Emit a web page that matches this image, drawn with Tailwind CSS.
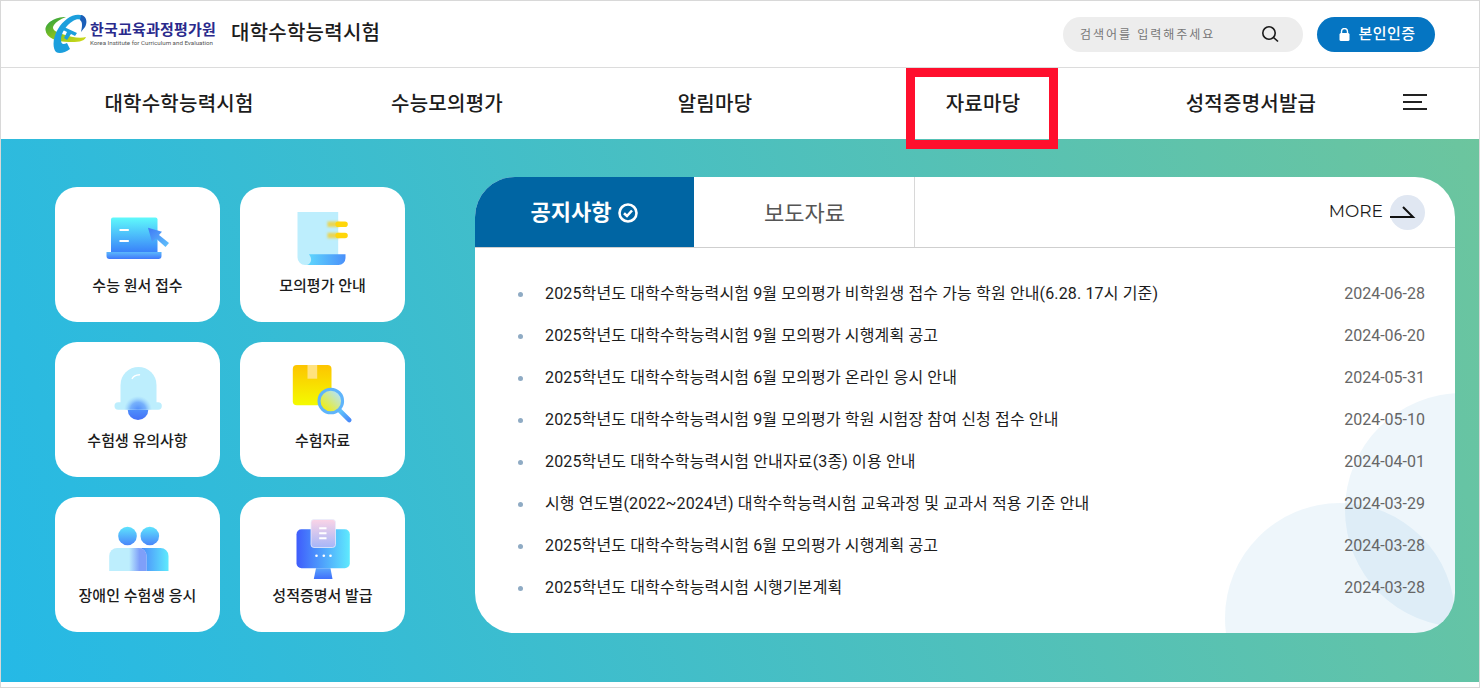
<!DOCTYPE html>
<html lang="ko">
<head>
    <meta charset="UTF-8">
    <title>대학수학능력시험</title>
    <script src="https://cdn.jsdelivr.net/npm/@tailwindcss/browser@4"></script>
</head>
<body class="bg-white font-['Roboto','Noto_Sans_CJK_KR',sans-serif] text-[#1c1c1c]">
<div class="relative h-[688px] w-[1480px] overflow-hidden border-x border-t border-[#d8d8d8]">

    <!-- top bar -->
    <header class="flex h-[67px] items-center justify-between border-b border-[#dcdcdc] pl-[44px] pr-[44px]">
        <div class="flex items-center">
            <svg class="h-[40px] w-[42px]" viewBox="0 0 42 40">
                <defs>
                    <linearGradient id="lg1" x1="0" y1="0" x2="1" y2="1"><stop offset="0" stop-color="#1f9e45"/><stop offset="0.500" stop-color="#8cc21e"/><stop offset="1" stop-color="#d6dc1a"/></linearGradient>
                </defs>
                <path d="M21 3C10 3 0 9 0.500 16C1 24 12 28 24 28C32 28 39 28 41 23C35 25 26 23 17 20C10 18 6 15 9 11C11 8 15 5 21 3Z" fill="url(#lg1)"/>
                <path d="M38 2C30 -2 19 5 13 15C8 23 7 33 11 38C14 40 20 39 25 35L22 29C18 31 16 30 16 26C16 19 21 11 28 7C31 5 34 5 37 6Z" fill="#1c9fdd"/>
                <path d="M36 1C41 2 43 7 40 13L36 18C37 13 38 8 35 6Z" fill="#1c5fb8"/>
                <path d="M19 13L32 19L30 22L26 20L22 26L19 24L22 18L18 16Z" fill="#1c9fdd"/>
            </svg>
            <div class="ml-[3px] flex flex-col">
                <span class="text-[15px] font-bold leading-[17px] tracking-[0.2px] whitespace-nowrap text-[#2a2a8c]">한국교육과정평가원</span>
                <span class="text-[6.2px] leading-[8px] whitespace-nowrap text-[#555]">Korea Institute for Curriculum and Evaluation</span>
            </div>
            <span class="ml-[15px] mb-[2px] text-[20px] font-medium tracking-[0.25px] whitespace-nowrap">대학수학능력시험</span>
        </div>
        <div class="flex items-center gap-[14px]">
            <div class="flex h-[35px] w-[240px] items-center justify-between rounded-full bg-[#ededed] pl-[17px] pr-[24px]">
                <span class="pt-[2px] text-[12px] tracking-[2px] text-[#777]">검색어를 입력해주세요</span>
                <svg class="h-[18px] w-[18px]" viewBox="0 0 18 18" fill="none" stroke="#1a1a1a"><circle cx="8" cy="8" r="6.200" stroke-width="1.600"/><path d="M12.500 12.500L17 16.500" stroke-width="1.600"/></svg>
            </div>
            <div class="flex h-[35px] w-[118px] items-center justify-center gap-[9px] rounded-full bg-[#0575c2] pl-[2px] text-white">
                <svg class="h-[13px] w-[11px]" viewBox="0 0 11 13" fill="#fff"><path d="M2.500 6V3.500a3 3 0 0 1 6 0V6" fill="none" stroke="#fff" stroke-width="1.400"/><rect x="0.500" y="5" width="10" height="8" rx="1.500"/></svg>
                <span class="pt-[1px] text-[15px] font-medium tracking-[0.4px]">본인인증</span>
            </div>
        </div>
    </header>

    <!-- main nav -->
    <nav class="flex h-[71px] items-center pl-[44px]">
        <a class="w-[268px] text-center text-[20px] font-medium tracking-[0.25px] whitespace-nowrap">대학수학능력시험</a>
        <a class="w-[268px] text-center text-[20px] font-medium tracking-[0.25px] whitespace-nowrap">수능모의평가</a>
        <a class="w-[268px] text-center text-[20px] font-medium tracking-[0.25px] whitespace-nowrap">알림마당</a>
        <a class="w-[268px] text-center text-[20px] font-medium tracking-[0.25px] whitespace-nowrap">자료마당</a>
        <a class="w-[268px] text-center text-[20px] font-medium tracking-[0.25px] whitespace-nowrap">성적증명서발급</a>
        <div class="mb-[3px] ml-[18px] flex w-[24px] flex-col gap-[5px]">
            <span class="h-[2px] w-[24px] bg-[#222]"></span>
            <span class="h-[2px] w-[19px] bg-[#222]"></span>
            <span class="h-[2px] w-[24px] bg-[#222]"></span>
        </div>
    </nav>

    <!-- highlight box over the nav item -->
    <div class="absolute left-[905px] top-[67px] h-[81px] w-[152px] border-[9px] border-[#ff0f2d]"></div>

    <main class="flex h-[543px] bg-[linear-gradient(70deg,#25b9e6,#6cc59e)] pl-[54px] pt-[38px]">
        <!-- quick links -->
        <div class="grid h-fit grid-cols-[165px_165px] gap-x-[20px] gap-y-[20px] pt-[10px]">
            <a class="flex h-[135px] flex-col items-center rounded-[22px] bg-white pt-[18px]">
                <svg class="h-[70px] w-[80px]" viewBox="0 0 80 70">
                    <defs>
                        <linearGradient id="c1" x1="0" y1="0" x2="0" y2="1"><stop offset="0" stop-color="#5ffafb"/><stop offset="1" stop-color="#3a82fa"/></linearGradient>
                        <linearGradient id="c1b" x1="0" y1="0" x2="0" y2="1"><stop offset="0" stop-color="#5cb8fc"/><stop offset="1" stop-color="#3f78fa"/></linearGradient>
                        <linearGradient id="c1a" x1="0" y1="0" x2="1" y2="1"><stop offset="0" stop-color="#3f78f5"/><stop offset="1" stop-color="#62c4fc"/></linearGradient>
                    </defs>
                    <path d="M13 14.500a2 2 0 0 1 2-2H57.500a2 2 0 0 1 2 2V47H13Z" fill="url(#c1)"/>
                    <path d="M8.500 47H63.500V51a3 3 0 0 1-3 3H11.500a3 3 0 0 1-3-3Z" fill="url(#c1b)"/>
                    <path d="M21.500 25H30.800M21.500 36H30.800" stroke="#fff" stroke-width="2"/>
                    <path d="M50 22.700L64 26.700L61 30L71 38L67.500 42L58 33.500L54 37Z" fill="url(#c1a)"/>
                </svg>
                <span class="text-[15px] font-medium">수능 원서 접수</span>
            </a>
            <a class="flex h-[135px] flex-col items-center rounded-[22px] bg-white pt-[18px]">
                <svg class="h-[70px] w-[80px]" viewBox="0 0 80 70">
                    <defs>
                        <linearGradient id="c2" x1="0" y1="0" x2="1" y2="0"><stop offset="0" stop-color="#5fd8fd"/><stop offset="1" stop-color="#4a90fa"/></linearGradient>
                        <filter id="c2f" x="-30%" y="-50%" width="160%" height="200%"><feGaussianBlur stdDeviation="1.200"/></filter>
                    </defs>
                    <path d="M14.500 7H55.200V50H30V60H22a7.500 7.500 0 0 1-7.500-7.500Z" fill="#bdeefd"/>
                    <path d="M25.800 49.300H62.500V53a7 7 0 0 1-7 7H24C28 59 30 54 25.800 49.300Z" fill="url(#c2)"/>
                    <path d="M44.500 19.200H56M44.500 30.500H56" stroke="#e8d658" stroke-width="5.500" filter="url(#c2f)"/>
                    <path d="M55.200 19.200H62M55.200 30.500H62" stroke="#ffd60a" stroke-width="5.600" stroke-linecap="round"/>
                </svg>
                <span class="text-[15px] font-medium">모의평가 안내</span>
            </a>
            <a class="flex h-[135px] flex-col items-center rounded-[22px] bg-white pt-[18px]">
                <svg class="h-[70px] w-[80px]" viewBox="0 0 80 70">
                    <defs>
                        <linearGradient id="c3" x1="0" y1="0" x2="0" y2="1"><stop offset="0" stop-color="#4f8ffb"/><stop offset="1" stop-color="#4470f7"/></linearGradient>
                        <radialGradient id="c3g" gradientUnits="userSpaceOnUse" cx="40" cy="50" r="14"><stop offset="0" stop-color="#4f8cfb"/><stop offset="0.550" stop-color="#5f9cfb" stop-opacity="0.750"/><stop offset="1" stop-color="#8cc8fc" stop-opacity="0"/></radialGradient>
                    </defs>
                    <path d="M29.700 49.700a10.300 10.300 0 0 0 20.600 0Z" fill="url(#c3)"/>
                    <path d="M22.500 25a18 18 0 0 1 36 0V44H22.500Z" fill="#bdeefd"/>
                    <rect x="16.500" y="42.300" width="47.300" height="7.400" rx="3.700" fill="#bdeefd"/>
                    <path d="M26 49.700a14 14 0 0 1 28 0Z" fill="url(#c3g)"/>
                    <path d="M34.200 18.500C35.500 16 38 15 41.500 14.800" stroke="#fff" stroke-width="1.400" fill="none" stroke-linecap="round"/>
                </svg>
                <span class="text-[15px] font-medium">수험생 유의사항</span>
            </a>
            <a class="flex h-[135px] flex-col items-center rounded-[22px] bg-white pt-[18px]">
                <svg class="h-[70px] w-[80px]" viewBox="0 0 80 70">
                    <defs>
                        <linearGradient id="c4" x1="0" y1="0" x2="0" y2="1"><stop offset="0" stop-color="#fdc400"/><stop offset="1" stop-color="#f4fb00"/></linearGradient>
                        <linearGradient id="c4l" x1="0" y1="1" x2="1" y2="0"><stop offset="0.150" stop-color="#f4ee08"/><stop offset="0.850" stop-color="#b4e4fa"/></linearGradient>
                        <linearGradient id="c4r" x1="0" y1="0" x2="1" y2="1"><stop offset="0" stop-color="#62c8fb"/><stop offset="1" stop-color="#4a8cf9"/></linearGradient>
                    </defs>
                    <rect x="9.800" y="5" width="38.700" height="40.300" rx="4" fill="url(#c4)"/>
                    <rect x="24.500" y="5" width="9.700" height="13.700" fill="#ffe27f"/>
                    <path d="M56.500 50.300L66.300 60.200" stroke="url(#c4r)" stroke-width="4.500" stroke-linecap="round"/>
                    <circle cx="47.800" cy="41" r="11.800" fill="url(#c4l)" stroke="#5fb4fb" stroke-width="3"/>
                </svg>
                <span class="text-[15px] font-medium">수험자료</span>
            </a>
            <a class="flex h-[135px] flex-col items-center rounded-[22px] bg-white pt-[18px]">
                <svg class="h-[70px] w-[80px]" viewBox="0 0 80 70">
                    <defs>
                        <linearGradient id="c5" x1="0" y1="0" x2="0" y2="1"><stop offset="0" stop-color="#5ee4fd"/><stop offset="1" stop-color="#4a85fa"/></linearGradient>
                        <linearGradient id="c5b" x1="0" y1="0" x2="1" y2="0"><stop offset="0" stop-color="#4a80fa"/><stop offset="1" stop-color="#5eeafd"/></linearGradient>
                        <linearGradient id="c5o" x1="0" y1="0" x2="1" y2="0"><stop offset="0" stop-color="#7f9ff9" stop-opacity="0"/><stop offset="0.600" stop-color="#7f9ff9"/></linearGradient>
                    </defs>
                    <circle cx="29.500" cy="21" r="9.300" fill="url(#c5)"/>
                    <circle cx="51.800" cy="21" r="9.300" fill="url(#c5)"/>
                    <path d="M11.200 41a8 8 0 0 1 8-8H40.500a8 8 0 0 1 8 8V56H11.200Z" fill="#bdeefd"/>
                    <path d="M40 33H62.500a8 8 0 0 1 8 8V56H48.500V41a8 8 0 0 0-8-8Z" fill="url(#c5b)"/>
                    <path d="M31 33H40.500a8 8 0 0 1 8 8V56H31Z" fill="url(#c5o)"/>
                </svg>
                <span class="text-[15px] font-medium">장애인 수험생 응시</span>
            </a>
            <a class="flex h-[135px] flex-col items-center rounded-[22px] bg-white pt-[18px]">
                <svg class="h-[70px] w-[80px]" viewBox="0 0 80 70">
                    <defs>
                        <linearGradient id="c6" x1="0" y1="0" x2="1" y2="0"><stop offset="0" stop-color="#3f5cfb"/><stop offset="1" stop-color="#5feafd"/></linearGradient>
                        <linearGradient id="c6s" x1="0" y1="0" x2="0" y2="1"><stop offset="0" stop-color="#5aa4fb"/><stop offset="1" stop-color="#3f6ffb"/></linearGradient>
                        <linearGradient id="c6d" x1="0" y1="0" x2="0" y2="1"><stop offset="0" stop-color="#fbd4e6"/><stop offset="1" stop-color="#a6b6f8"/></linearGradient>
                    </defs>
                    <path d="M33 53.300H47.500L49.500 64H30.800Z" fill="url(#c6s)"/>
                    <rect x="13.500" y="14.300" width="53.300" height="39" rx="5" fill="url(#c6)"/>
                    <rect x="28" y="4.500" width="24.500" height="28" rx="3" fill="url(#c6d)" stroke="#e8ecfb" stroke-width="0.800"/>
                    <path d="M36.200 13.300H43.500M36.200 18.300H43.500M36.200 23.300H43.500" stroke="#fff" stroke-width="2"/>
                    <circle cx="33.500" cy="40.700" r="1.300" fill="#fff"/><circle cx="40.800" cy="40.700" r="1.300" fill="#fff"/><circle cx="47.500" cy="40.700" r="1.300" fill="#fff"/>
                </svg>
                <span class="text-[15px] font-medium">성적증명서 발급</span>
            </a>
        </div>

        <!-- notice panel -->
        <section class="relative ml-[70px] h-[456px] w-[980px] overflow-hidden rounded-[40px] bg-white">
            <div class="absolute left-[750px] top-[326px] h-[230px] w-[230px] rounded-full bg-[#0a7cc0]/7"></div>
            <div class="absolute left-[870px] top-[216px] h-[234px] w-[234px] rounded-full bg-[#0a7cc0]/7"></div>
            <div class="relative flex h-[71px] items-stretch border-b border-[#cfcfcf]">
                <div class="flex w-[219px] items-center justify-center gap-[7px] bg-[#0065a3] pt-[1px] text-white">
                    <span class="text-[22px] font-bold">공지사항</span>
                    <svg class="h-[20px] w-[20px]" viewBox="0 0 20 20" fill="none" stroke="#fff" stroke-width="2.600"><circle cx="10" cy="10" r="8.500"/><path d="M6 10.200L9 13L14 7.500"/></svg>
                </div>
                <div class="ml-px flex w-[220px] items-center justify-center border-r border-[#d8d8d8] pt-[3px] text-[22px] text-[#555]">보도자료</div>
                <div class="ml-auto flex items-center gap-[7px] pr-[30px]">
                    <span class="font-['Montserrat','Open_Sans',sans-serif] text-[17px]">MORE</span>
                    <span class="flex h-[35px] w-[35px] items-center justify-center rounded-full bg-[#e0e7f2]">
                        <svg class="h-[35px] w-[35px]" viewBox="0 0 35 35" fill="none" stroke="#111" stroke-width="2"><path d="M0 22H23L13 12"/></svg>
                    </span>
                </div>
            </div>
            <ul class="relative pl-[43px] pr-[30px] pt-[25px]">
                <li class="flex h-[42px] items-center justify-between"><span class="flex items-center"><i class="mr-[22px] h-[5px] w-[5px] rounded-full bg-[#8fabc4]"></i><span class="text-[16px] tracking-[0.14px]">2025학년도 대학수학능력시험 9월 모의평가 비학원생 접수 가능 학원 안내(6.28. 17시 기준)</span></span><span class="text-[16px] text-[#666]">2024-06-28</span></li>
                <li class="flex h-[42px] items-center justify-between"><span class="flex items-center"><i class="mr-[22px] h-[5px] w-[5px] rounded-full bg-[#8fabc4]"></i><span class="text-[16px] tracking-[0.14px]">2025학년도 대학수학능력시험 9월 모의평가 시행계획 공고</span></span><span class="text-[16px] text-[#666]">2024-06-20</span></li>
                <li class="flex h-[42px] items-center justify-between"><span class="flex items-center"><i class="mr-[22px] h-[5px] w-[5px] rounded-full bg-[#8fabc4]"></i><span class="text-[16px] tracking-[0.14px]">2025학년도 대학수학능력시험 6월 모의평가 온라인 응시 안내</span></span><span class="text-[16px] text-[#666]">2024-05-31</span></li>
                <li class="flex h-[42px] items-center justify-between"><span class="flex items-center"><i class="mr-[22px] h-[5px] w-[5px] rounded-full bg-[#8fabc4]"></i><span class="text-[16px] tracking-[0.14px]">2025학년도 대학수학능력시험 9월 모의평가 학원 시험장 참여 신청 접수 안내</span></span><span class="text-[16px] text-[#666]">2024-05-10</span></li>
                <li class="flex h-[42px] items-center justify-between"><span class="flex items-center"><i class="mr-[22px] h-[5px] w-[5px] rounded-full bg-[#8fabc4]"></i><span class="text-[16px] tracking-[0.14px]">2025학년도 대학수학능력시험 안내자료(3종) 이용 안내</span></span><span class="text-[16px] text-[#666]">2024-04-01</span></li>
                <li class="flex h-[42px] items-center justify-between"><span class="flex items-center"><i class="mr-[22px] h-[5px] w-[5px] rounded-full bg-[#8fabc4]"></i><span class="text-[16px] tracking-[0.14px]">시행 연도별(2022~2024년) 대학수학능력시험 교육과정 및 교과서 적용 기준 안내</span></span><span class="text-[16px] text-[#666]">2024-03-29</span></li>
                <li class="flex h-[42px] items-center justify-between"><span class="flex items-center"><i class="mr-[22px] h-[5px] w-[5px] rounded-full bg-[#8fabc4]"></i><span class="text-[16px] tracking-[0.14px]">2025학년도 대학수학능력시험 6월 모의평가 시행계획 공고</span></span><span class="text-[16px] text-[#666]">2024-03-28</span></li>
                <li class="flex h-[42px] items-center justify-between"><span class="flex items-center"><i class="mr-[22px] h-[5px] w-[5px] rounded-full bg-[#8fabc4]"></i><span class="text-[16px] tracking-[0.14px]">2025학년도 대학수학능력시험 시행기본계획</span></span><span class="text-[16px] text-[#666]">2024-03-28</span></li>
            </ul>
        </section>
    </main>
    <div class="mt-[5px] h-px bg-[#d8d8d8]"></div>
</div>
</body>
</html>
